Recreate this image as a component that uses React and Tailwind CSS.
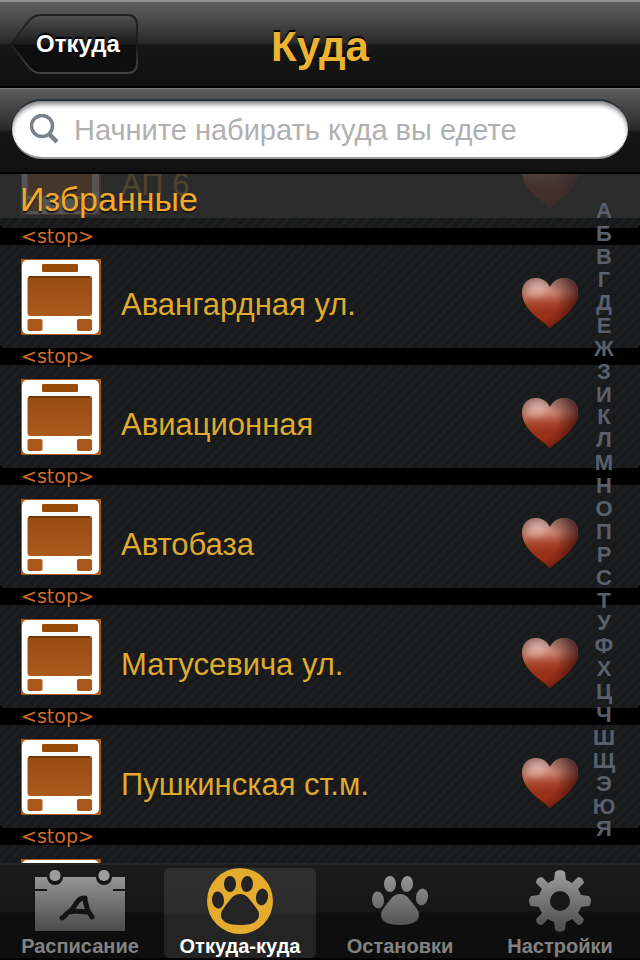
import React from 'react';

const stops = ['АП 6', 'Авангардная ул.', 'Авиационная', 'Автобаза', 'Матусевича ул.', 'Пушкинская ст.м.', ''];
const letters = 'АБВГДЕЖЗИКЛМНОПРСТУФХЦЧШЩЭЮЯ'.split('');

function Defs() {
  return (
    <svg className="absolute h-0 w-0" aria-hidden="true">
      <defs>
        <linearGradient id="grey" x1="0" y1="868" x2="0" y2="932" gradientUnits="userSpaceOnUse">
          <stop offset="0" stopColor="#a0a0a0" />
          <stop offset="1" stopColor="#484848" />
        </linearGradient>
        <linearGradient id="orange" x1="0" y1="0" x2="0" y2="1">
          <stop offset="0" stopColor="#964d12" />
          <stop offset="0.5" stopColor="#a25017" />
          <stop offset="1" stopColor="#ac5a1c" />
        </linearGradient>
        <linearGradient id="heart" x1="0.45" y1="0" x2="0.5" y2="1">
          <stop offset="0" stopColor="#dcaaa0" />
          <stop offset="0.3" stopColor="#c98472" />
          <stop offset="0.5" stopColor="#a9452d" />
          <stop offset="0.7" stopColor="#97301a" />
          <stop offset="1" stopColor="#b03216" />
        </linearGradient>
        <radialGradient id="heartShade" cx="0.34" cy="0.5" r="0.7">
          <stop offset="0.4" stopColor="#200" stopOpacity="0" />
          <stop offset="1" stopColor="#200" stopOpacity="0.7" />
        </radialGradient>
        <radialGradient id="heartShine" cx="0.27" cy="0.2" r="0.26">
          <stop offset="0" stopColor="#fff" stopOpacity="0.3" />
          <stop offset="1" stopColor="#fff" stopOpacity="0" />
        </radialGradient>
      </defs>
    </svg>
  );
}

function BusIcon() {
  return (
    <svg className="h-[76px] w-20 shrink-0" viewBox="0 0 80 76" aria-hidden="true">
      <rect width="80" height="76" rx="1" fill="#a85a1c" />
      <rect x="1" y="1" width="77" height="74" rx="5" fill="#fff" />
      <rect x="21" y="5" width="36" height="8" rx="1" fill="#964d08" />
      <rect x="6.500" y="17" width="64.500" height="40" rx="3" fill="url(#orange)" />
      <path d="M8 18h61" stroke="#743708" strokeWidth="2" />
      <rect x="6.500" y="60" width="15" height="12" rx="2" fill="#a9571a" />
      <rect x="56" y="60" width="15" height="12" rx="2" fill="#a9571a" />
    </svg>
  );
}

function HeartIcon() {
  const d = 'M28 9C24 1 17 0 14 0C6 0 0 6 0 14C0 23 5 30 12 37C19 43 24 46 28 50C32 46 37 43 44 37C51 30 56 23 56 14C56 6 50 0 42 0C39 0 32 1 28 9Z';
  return (
    <svg className="h-[50px] w-14" viewBox="0 0 56 50" aria-hidden="true">
      <path d={d} fill="url(#heart)" />
      <path d={d} fill="url(#heartShade)" />
      <path d={d} fill="url(#heartShine)" />
    </svg>
  );
}

function CalendarIcon() {
  return (
    <svg className="h-[66px] w-24" viewBox="32 867 96 66" aria-hidden="true">
      <path d="M35 876H125V930H35Z" fill="url(#grey)" />
      <path d="M35 889h12M113 889h12" stroke="#161616" strokeWidth="2" />
      <circle cx="55" cy="876" r="8" fill="#161616" />
      <circle cx="104" cy="876" r="8" fill="#161616" />
      <rect x="49.500" y="869" width="11" height="11" rx="5" fill="#9c9c9c" />
      <rect x="98.500" y="869" width="11" height="11" rx="5" fill="#9c9c9c" />
      <path d="M62 917C65 916 66 912 69 911C74 908 75 903 78 900C80 897 83 897 85 897C85 901 86 904 87 907C88 911 90 913 92 916M69 911C76 909 80 911 88 911" fill="none" stroke="#141414" strokeWidth="5" strokeLinecap="round" strokeLinejoin="round" />
    </svg>
  );
}

function PawShape() {
  return (
    <>
      <ellipse cx="58" cy="899" rx="6" ry="8.500" transform="rotate(-6 58 899)" />
      <ellipse cx="70" cy="883" rx="6" ry="8" />
      <ellipse cx="87" cy="883" rx="6" ry="8" transform="rotate(6 87 883)" />
      <ellipse cx="102" cy="896" rx="6" ry="8.500" transform="rotate(10 102 896)" />
      <path d="M80 893C87 893 89 898 94 904C97 908 99 910 99 914C99 921 91 924 80 924C69 924 61 921 61 914C61 910 63 908 66 904C71 898 73 893 80 893Z" />
    </>
  );
}

function PawIcon({ active }) {
  return (
    <svg className="h-[66px] w-24" viewBox="32 867 96 66" aria-hidden="true">
      {active && <circle cx="80" cy="900" r="33" fill="#e4ab2f" />}
      <g fill={active ? '#242424' : 'url(#grey)'}><PawShape /></g>
    </svg>
  );
}

function GearIcon() {
  return (
    <svg className="h-[66px] w-24" viewBox="32 867 96 66" aria-hidden="true">
      <mask id="gearHole" maskUnits="userSpaceOnUse" x="40" y="860" width="80" height="80">
        <rect x="40" y="860" width="80" height="80" fill="#fff" />
        <circle cx="80" cy="900" r="10" fill="#000" />
      </mask>
      <g fill="url(#grey)" mask="url(#gearHole)">
        <path d="M75 871Q80 867 85 871L86 879Q89 880 92 882L98 876Q103 876 104 882L98 888Q100 891 101 894L109 895Q113 900 109 905L101 906Q100 909 98 912L104 918Q103 924 98 924L92 918Q89 920 86 921L85 929Q80 933 75 929L74 921Q71 920 68 918L62 924Q56 924 56 918L62 912Q60 909 59 906L51 905Q47 900 51 895L59 894Q60 891 62 888L56 882Q56 876 62 876L68 882Q71 880 74 879Z" />
      </g>
    </svg>
  );
}

const tabs = [
  { label: 'Расписание', icon: <CalendarIcon /> },
  { label: 'Откуда-куда', icon: <PawIcon active />, active: true },
  { label: 'Остановки', icon: <PawIcon /> },
  { label: 'Настройки', icon: <GearIcon /> },
];

export default function App() {
  return (
    <div className="flex h-screen flex-col overflow-hidden bg-black font-['Liberation_Sans',Arial,sans-serif]">
      <Defs />
      <header className="grid h-[88px] shrink-0 grid-cols-[1fr_auto_1fr] items-center border-t-2 border-b-2 border-t-[#929292] border-b-black bg-[linear-gradient(#606060,#2b2b2b_48%,#161616_52%,#111)] px-2.5">
        <button type="button" className="relative flex h-[60px] w-32 items-center justify-center pl-2 text-2xl font-bold text-white">
          <svg className="absolute inset-0 h-full w-full" viewBox="0 0 128 60" aria-hidden="true">
            <defs>
              <linearGradient id="back" x1="0" y1="0" x2="0" y2="1">
                <stop offset="0" stopColor="#505050" />
                <stop offset="0.5" stopColor="#1b1b1b" />
                <stop offset="0.52" stopColor="#0d0d0d" />
                <stop offset="1" stopColor="#0f0f0f" />
              </linearGradient>
              <linearGradient id="backEdge" x1="0" y1="0" x2="0" y2="1">
                <stop offset="0" stopColor="#202020" />
                <stop offset="0.5" stopColor="#1c1c1c" />
                <stop offset="1" stopColor="#444" />
              </linearGradient>
            </defs>
            <path d="M1 30L17 9Q23 1 30 1H117Q127 1 127 11V49Q127 59 117 59H30Q23 59 17 51Z" fill="url(#back)" stroke="url(#backEdge)" strokeWidth="2" />
          </svg>
          <span className="relative [text-shadow:0_-2px_1px_#000]">Откуда</span>
        </button>
        <h1 className="pt-1.5 text-[42px] leading-none font-bold text-[#eab331] [text-shadow:0_-2px_1px_#000]">Куда</h1>
      </header>

      <div className="h-[86px] shrink-0 border-t border-b-2 border-t-[#777] border-b-black bg-[linear-gradient(#5c5c5c,#2b2b2b_48%,#161616_52%,#111)] px-3 pt-2.5">
        <label className="flex h-[60px] items-center gap-4 rounded-full border-t-2 border-b-2 border-t-[#252d3a] border-b-[#999] bg-white pr-6 pl-[18px] shadow-[inset_0_4px_5px_-1px_#777]">
          <svg className="h-[30px] w-[28px] shrink-0" viewBox="0 0 28 30" fill="none" stroke="#79818b" aria-hidden="true">
            <circle cx="12" cy="12" r="10.500" strokeWidth="3.500" />
            <path d="M19 20L27 28" strokeWidth="4.500" />
          </svg>
          <input type="search" aria-label="Куда вы едете" placeholder="Начните набирать куда вы едете" className="min-w-0 flex-1 bg-transparent pt-1 text-[29px] text-black outline-none placeholder:text-[#b0b0b0]" />
        </label>
      </div>

      <main className="relative min-h-0 flex-1 overflow-hidden bg-black">
        <h2 className="absolute inset-x-0 top-0 z-10 flex h-11 items-center bg-[#303030]/82 pt-1.5 pl-5 text-[34px] leading-none text-[#f5a927] [text-shadow:0_2px_1px_#181818]">Избранные</h2>
        <ul className="-mt-[49px]">
          {stops.map((name, i) => (
            <li key={i} className="h-[120px]">
              <div className="flex h-[103px] items-center gap-5 rounded-b-sm bg-[repeating-linear-gradient(135deg,#17191b_0px,#17191b_2px,#1d1f20_4px,#17191b_7px)] pr-[62px] pl-[21px]">
                <BusIcon />
                <span className="flex-1 pt-4 text-[31px] leading-9 text-[#dfaa2d]">{name}</span>
                <button type="button" aria-label="В избранном" className="pt-3"><HeartIcon /></button>
              </div>
              {name && <div className="h-[17px] pl-[21px] font-['DejaVu_Sans',sans-serif] text-[19px] leading-4 text-[#d56b22]">&lt;stop&gt;</div>}
            </li>
          ))}
        </ul>
        <nav aria-label="Алфавит" className="absolute top-[26px] right-5 bottom-[22px] z-20 flex w-8 flex-col text-[22px] font-bold text-[#59606b]">
          {letters.map((l) => (
            <a key={l} href={'#' + l} className="flex min-h-0 flex-1 items-center justify-center leading-none">{l}</a>
          ))}
        </nav>
      </main>

      <nav aria-label="Разделы" className="grid h-[97px] shrink-0 grid-cols-4 border-t-2 border-b-2 border-t-[#242424] border-b-black bg-[linear-gradient(#1b1b1b,#161616_50%,#0e0e0e_52%,#0e0e0e)]">
        {tabs.map((t) => (
          <button key={t.label} type="button" aria-current={t.active ? 'page' : undefined} className={t.active ? 'mx-1 mt-[3px] mb-[2px] flex flex-col items-center rounded-md bg-[linear-gradient(#303030,#2b2b2b_50%,#242424_52%,#242424)] text-white' : 'mx-1 mt-[3px] mb-[2px] flex flex-col items-center text-[#828282]'}>
            {t.icon}
            <span className="text-xl leading-6 font-bold whitespace-nowrap">{t.label}</span>
          </button>
        ))}
      </nav>
    </div>
  );
}
